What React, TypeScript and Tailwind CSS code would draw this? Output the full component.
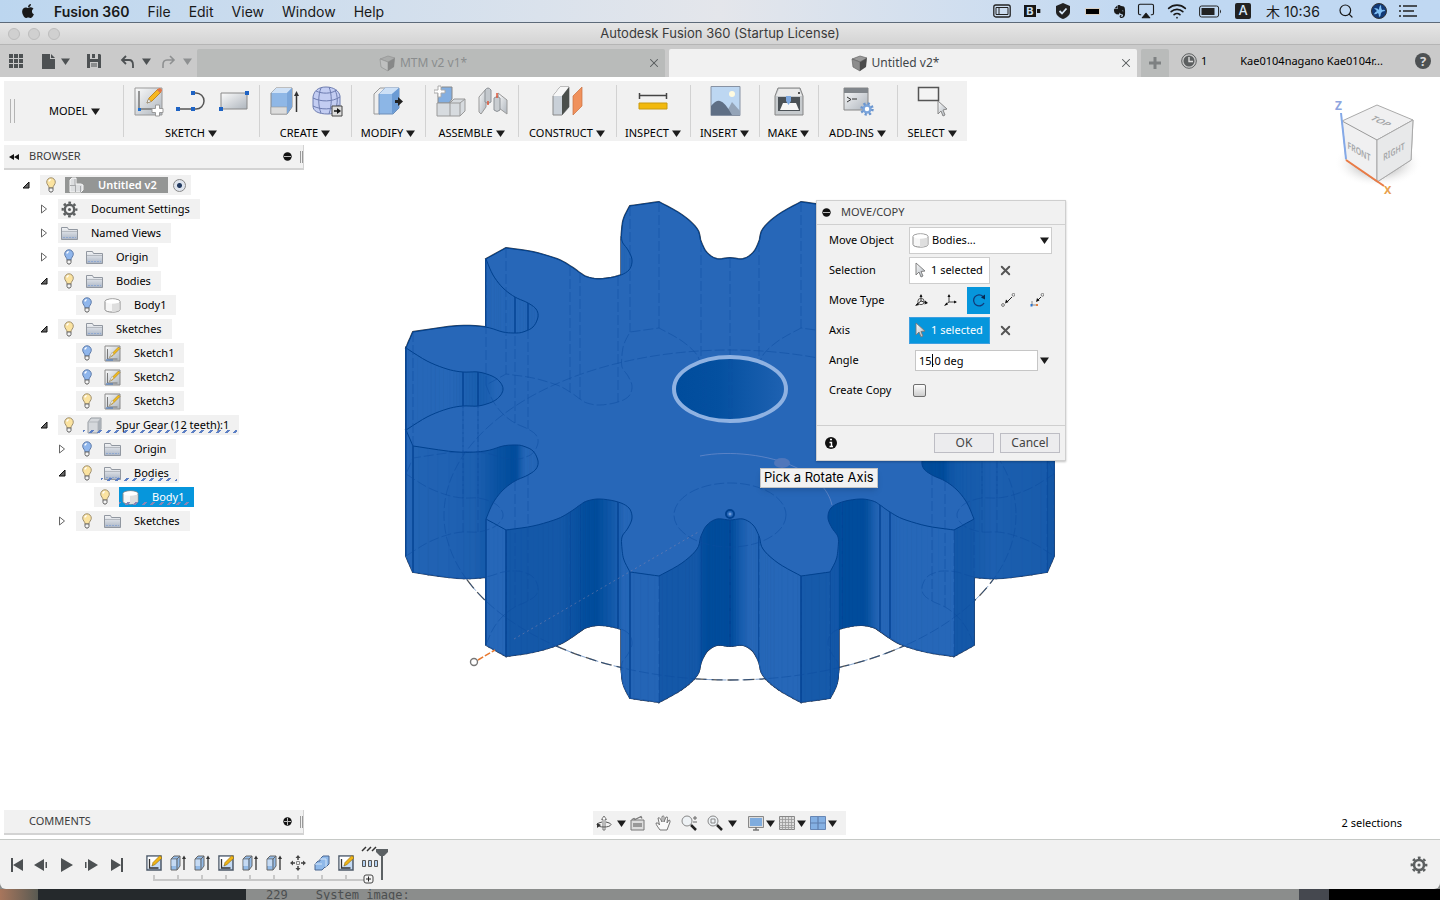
import { useState } from 'react';
import type { ReactNode } from 'react';
import { FaApple, FaEvernote } from 'react-icons/fa';
import { Airplay, Search, Wifi, X } from 'lucide-react';
import clsx from 'clsx';

/* ---------- gear geometry ---------- */

type Mark = 0 | 1 | 2; // 1 = sharp corner, 2 = seam between surfaces
type Pt = [number, number, Mark];

const CX = 730;
const CY = 389;
const DEPTH = 126;
const TILT = 0.58;

// one quarter of the top face, from twelve o'clock round to nine o'clock
const QUARTER: Pt[] = [
    [0, -131, 2], [-13, -130, 0], [-23, -136, 0], [-29, -147, 2], [-33, -160, 0], [-48, -174, 0],
    [-71, -187, 1], [-100, -183, 1], [-106, -171, 0], [-108, -160, 0], [-108, -148, 0], [-102, -139, 0],
    [-98, -129, 0], [-101, -119, 0], [-112, -113, 2], [-130, -110, 0], [-143, -112, 0], [-150, -116, 2],
    [-160, -123, 2], [-173, -130, 0], [-197, -137, 0], [-224, -141, 1], [-244, -130, 1], [-237, -114, 0],
    [-227, -101, 0], [-215, -92, 2], [-202, -86, 2], [-194, -80, 0], [-192, -72, 0], [-197, -62, 0],
    [-207, -57, 0], [-215, -56, 0], [-227, -57, 0], [-245, -62, 0], [-273, -63, 0], [-317, -57, 1],
    [-324, -41, 1], [-303, -28, 0], [-283, -20, 0], [-267, -17, 2], [-252, -17, 2], [-238, -13, 0],
    [-230, -7, 0], [-227, 0, 0],
];

const leftHalf: Pt[] = [
    ...QUARTER,
    ...QUARTER.slice(0, -1).reverse().map(([x, y, m]): Pt => [x, -y, m]),
];
const ring: Pt[] = [
    ...leftHalf,
    ...leftHalf.slice(1, -1).reverse().map(([x, y, m]): Pt => [-x, y, m]),
];

function spline(a: number, b: number, c: number, d: number, t: number) {
    return 0.5 * (2 * b + (c - a) * t + (2 * a - 5 * b + 4 * c - d) * t * t + (3 * b - a - 3 * c + d) * t * t * t);
}

const STEPS = 5;
const outline: Pt[] = ring.flatMap((p1, i) => {
    const n = ring.length;
    const p2 = ring[(i + 1) % n];
    const p0 = p1[2] === 1 ? p1 : ring[(i + n - 1) % n];
    const p3 = p2[2] === 1 ? p2 : ring[(i + 2) % n];
    return Array.from({ length: STEPS }, (_, s): Pt => [
        CX + spline(p0[0], p1[0], p2[0], p3[0], s / STEPS),
        CY + spline(p0[1], p1[1], p2[1], p3[1], s / STEPS),
        s === 0 ? p1[2] : 0,
    ]);
});

const toPath = (dy: number) =>
    'M' + outline.map(([x, y]) => `${x.toFixed(1)} ${(y + dy).toFixed(1)}`).join('L') + 'Z';

// horizontal part of the surface normal, averaged over neighbours but never across a corner
function normalAt(i: number) {
    const n = outline.length;
    let from = i;
    let to = i + 1;
    for (let k = 0; k < 7 && outline[(from + n) % n][2] !== 1; k++) from--;
    for (let k = 0; k < 7 && outline[to % n][2] !== 1; k++) to++;
    const a = outline[(from + n) % n];
    const b = outline[to % n];
    const dy = (b[1] - a[1]) / TILT;
    return -dy / (Math.hypot(b[0] - a[0], dy) || 1);
}

const clamp = (v: number) => Math.max(0, Math.min(1, v));

// light comes from the left, the roots between the teeth sit in shadow
function shade(nx: number, x: number, y: number) {
    const light = [38, 103, 184];
    const medium = [20, 88, 168];
    const dark = [0, 76, 156];
    const turn = clamp((nx + 0.3) / 0.6);
    const radius = Math.hypot(x - CX, (y - CY) / TILT);
    const root = clamp((280 - radius) / 45) * clamp(1 + nx * 1.4);
    const rgb = light.map((v, k) => {
        const base = v + (medium[k] - v) * turn;
        return Math.round(base + (dark[k] - base) * root);
    });
    return `rgb(${rgb.join(',')})`;
}

const walls = outline
    .map((a, i) => {
        const b = outline[(i + 1) % outline.length];
        const y = (a[1] + b[1]) / 2;
        return {
            dx: b[0] - a[0],
            y,
            seam: a[2] > 0,
            x0: a[0],
            y0: a[1],
            d: `M${a[0]} ${a[1]}L${b[0]} ${b[1]}v${DEPTH}L${a[0]} ${a[1] + DEPTH}Z`,
            fill: shade(normalAt(i), a[0], y),
        };
    })
    .filter((w) => w.dx > 0)
    .sort((p, q) => p.y - q.y);

const marks = outline.filter((p) => p[2] > 0);

function Gear() {
    return (
        <svg viewBox="390 190 680 530" width="680" height="530" aria-label="Spur gear model">
            <defs>
                <linearGradient id="bore" x1="0" x2="1">
                    <stop offset="0" stopColor="#004c9c" />
                    <stop offset=".4" stopColor="#0450a0" />
                    <stop offset="1" stopColor="#1f62b2" />
                </linearGradient>
            </defs>
            <ellipse cx={CX} cy={CY + DEPTH} rx="286" ry="165" fill="none" stroke="#555" strokeWidth="1.3" strokeDasharray="11 5" />
            <path d={toPath(0)} fill="#2767b8" stroke="#3b4350" strokeWidth="2" />
            {walls.map((w, i) => (
                <path key={i} d={w.d} fill="none" stroke="#2b3d5a" strokeWidth="2" />
            ))}
            {walls.map((w, i) => (
                <g key={i}>
                    <path d={w.d} fill={w.fill} stroke={w.fill} strokeWidth=".8" />
                    {w.seam && <path d={`M${w.x0} ${w.y0}v${DEPTH}`} stroke="#003f8e" strokeWidth="1.3" />}
                </g>
            ))}
            <path d={toPath(0)} fill="#2767b8" stroke="#00418f" strokeWidth="1" />
            <g fill="none" stroke="#0c4c9f" strokeOpacity=".5" strokeDasharray="10 3">
                <path d={toPath(DEPTH)} />
                {marks.map(([x, y], i) => (
                    <path key={i} d={`M${x} ${y}v${DEPTH}`} />
                ))}
                <ellipse cx={CX} cy={CY + DEPTH} rx="286" ry="165" />
                <ellipse cx={CX} cy={CY + DEPTH} rx="56" ry="32" />
            </g>
            <ellipse cx={CX} cy={CY} rx="56" ry="32" fill="url(#bore)" stroke="#8fb2e2" strokeWidth="4" />
            <path d="M703 364v44M706 364v46M729 359v60M732 359v60" stroke="#0c4c9f" strokeOpacity=".4" strokeDasharray="10 3" />
            <circle cx="730" cy="514" r="4" fill="none" stroke="#00418f" strokeWidth="2" />
            <circle cx="730" cy="514" r="1.5" fill="#6f9bd6" />
            {/* rotate manipulator */}
            <path d="M700 456C730 450 770 455 795 467C815 477 828 488 832 505" fill="none" stroke="#7b94cf" strokeOpacity=".6" />
            <ellipse cx="782" cy="463" rx="8" ry="5" fill="#5077bb" />
            <path d="M514 639L700 531" stroke="#8c86ac" strokeOpacity=".5" strokeDasharray="2 3" />
            <path d="M478 660l17-10" stroke="#e8782e" strokeWidth="1.5" strokeDasharray="6 2" />
            <circle cx="474" cy="662" r="3.5" fill="#fff" stroke="#777" strokeWidth="1.4" />
        </svg>
    );
}

/* ---------- small icons ---------- */

const Caret = ({ className = 'text-[#1c1c1c]' }: { className?: string }) => (
    <svg width="9" height="7" viewBox="0 0 9 7" className={clsx('shrink-0', className)}>
        <path d="M0 .5h9L4.5 7z" fill="currentColor" />
    </svg>
);

function Gradients() {
    return (
        <svg className="absolute size-0" aria-hidden="true">
            <defs>
                <linearGradient id="steel" x1="0" y1="0" x2="1" y2="1">
                    <stop offset="0" stopColor="#fbfbfb" />
                    <stop offset="1" stopColor="#aeb5bd" />
                </linearGradient>
                <linearGradient id="folder" x1="0" y1="0" x2="0" y2="1">
                    <stop offset="0" stopColor="#f4f5f6" />
                    <stop offset="1" stopColor="#aab4c4" />
                </linearGradient>
            </defs>
        </svg>
    );
}

const Icon = ({ size = 32, box = 32, children }: { size?: number; box?: number; children: ReactNode }) => (
    <svg width={size} height={size} viewBox={`0 0 ${box} ${box}`} fill="none" className="shrink-0" aria-hidden="true">
        {children}
    </svg>
);

const Cog = ({ size = 18 }: { size?: number }) => (
    <Icon size={size} box={18}>
        <circle cx="9" cy="9" r="5" stroke="#5c5f60" strokeWidth="2.6" />
        <circle cx="9" cy="9" r="7.2" stroke="#5c5f60" strokeWidth="2.4" strokeDasharray="2.8 2.85" strokeDashoffset="1.4" />
        <circle cx="9" cy="9" r="1.6" fill="#5c5f60" />
    </Icon>
);

const Cube = ({ faded }: { faded?: boolean }) => (
    <Icon size={17} box={17}>
        <g opacity={faded ? 0.45 : 1}>
            <path d="M1 4l8-3 7 2-7 4z" fill="#9a9a9a" stroke="#666" strokeWidth=".7" />
            <path d="M1 4l8 3v9l-7-4z" fill={faded ? '#c8c8c8' : '#8c8c8c'} stroke="#666" strokeWidth=".7" />
            <path d="M9 7l7-4-1 9-6 4z" fill="#4c4c4c" />
        </g>
    </Icon>
);

const Bulb = ({ on }: { on: boolean }) => (
    <Icon size={16} box={16}>
        <path d="M8 .8a4.3 4.3 0 00-4.3 4.4C3.7 7.6 6 8.5 6 11h4c0-2.5 2.3-3.4 2.3-5.8A4.3 4.3 0 008 .8z" fill={on ? '#fbe3a0' : '#8fb6ec'} stroke={on ? '#a09070' : '#5f7ba8'} />
        <path d="M5.8 4.5a2.3 2.3 0 012-1.8" stroke="#fff" strokeWidth="1.3" />
        <path d="M6 11h4v2.500l-1 1.500H7l-1-1.500z" fill="#f4f4f4" stroke="#666" />
    </Icon>
);

const Folder = () => (
    <Icon size={17} box={17}>
        <path d="M.5 14.500v-12h6l1 2h9v10z" fill="url(#folder)" stroke="#9197a0" />
        <path d="M1 6.500h15" stroke="#b4b9c0" />
        <path d="M2 12.500h13" stroke="#8fa8d0" strokeDasharray="2 1" />
    </Icon>
);

const Cylinder = () => (
    <Icon size={17} box={17}>
        <path d="M1 4.500C1 1 16 1 16 4.500v8c0 3.500-15 3.500-15 0z" fill="#f6f6f6" stroke="#8b8b8b" />
        <path d="M8 6h7.500v7c-2 1.500-5 2-7.500 2z" fill="#dedede" />
        <ellipse cx="8.500" cy="4.500" rx="7" ry="2.200" fill="#fff" />
    </Icon>
);

const SketchSmall = () => (
    <Icon size={17} box={17}>
        <path d="M1 1h15v15H1z" fill="url(#steel)" stroke="#8a8a8a" />
        <path d="M3.500 4v10h10" stroke="#777" />
        <path d="M5.500 12.500l2-3.500 7-7 1.500 1.500-7 7z" fill="#f4bd1c" stroke="#946c12" strokeWidth=".5" />
        <path d="M5.500 12.500l2.500-5 1.500 1.500z" fill="#fff" stroke="#999" strokeWidth=".5" />
        <path d="M2 15h7" stroke="#3f75c0" />
    </Icon>
);

const SolidBox = () => (
    <Icon size={17} box={17}>
        <path d="M2 5l3-4h10v11l-3 4H2z" fill="#d5d8dc" stroke="#969ba1" />
        <path d="M2 5h10v11M12 5l3-4" stroke="#b3b7bc" />
        <path d="M12 5l3-4v11l-3 4z" fill="#aab0b7" />
    </Icon>
);

const Assembly = () => (
    <Icon size={16} box={16}>
        <path d="M2 3l2-2h4v6h5l2 1v5l-2 2H2z" fill="#dcdee0" stroke="#f8f8f8" />
        <path d="M2 8.500h6M7.500 8v7M7 2v6M12.500 9v6" stroke="#a6a8aa" />
    </Icon>
);

const Pointer = () => (
    <Icon size={16} box={16}>
        <path d="M4 1v12l3-3 2 5 2-1-2-4.500 4-.5z" fill="url(#steel)" stroke="#777" strokeWidth=".9" />
    </Icon>
);

const Dot = ({ plus }: { plus?: boolean }) => (
    <Icon size={9} box={9}>
        <circle cx="4.500" cy="4.500" r="4.200" fill="#111" />
        <path d={plus ? 'M1 4.500h7M4.500 1v7' : 'M1 4.500h7'} stroke="#bbb" />
    </Icon>
);

/* ---------- toolbar artwork ---------- */

const art = {
    sketch: (
        <Icon>
            <path d="M3 3h27v27H3z" fill="url(#steel)" stroke="#999" />
            <path d="M7 6v18h14" stroke="#777" strokeWidth="1.500" />
            <path d="M6 23h3v3H6z" fill="#1f6fd0" />
            <path d="M15 18l2-5 9-9 3 3-9 9z" fill="#f7b820" stroke="#b8790f" strokeWidth=".8" />
            <path d="M25 5l2-2q3 0 3 3l-2 2z" fill="#e0774a" />
            <path d="M15 18l1.500-4 2.500 2.500z" fill="#fff" stroke="#777" strokeWidth=".6" />
            <path d="M23.500 20h4v3.500H31v4h-3.500V31h-4v-3.500H20v-4h3.500z" fill="#fff" stroke="#999" />
        </Icon>
    ),
    line: (
        <Icon>
            <path d="M3 24h15M18 8h3a8 8 0 010 16h-3" stroke="#555" strokeWidth="1.500" />
            <path d="M1 22h4v4H1zM16 22h4v4h-4zM16 6h4v4h-4z" fill="#1e63c4" />
        </Icon>
    ),
    rect: (
        <Icon>
            <path d="M3 8h26v16H3z" fill="url(#steel)" stroke="#888" />
            <path d="M1 22h4v4H1zM27 6h4v4h-4z" fill="#1e63c4" />
        </Icon>
    ),
    extrude: (
        <Icon>
            <path d="M3 8l5-5h16v19l-5 7H3z" fill="#8fb7e6" stroke="#888" />
            <path d="M3 8h16l5-5H8z" fill="#cfe1f6" />
            <path d="M3 22h16v7H3z" fill="#dcdcdc" stroke="#999" strokeWidth=".6" />
            <path d="M19 8l5-5v19l-5 7z" fill="#7ba6da" />
            <path d="M28.500 27V9" stroke="#333" strokeWidth="1.500" />
            <path d="M26 11l2.500-5 2.500 5z" fill="#333" />
        </Icon>
    ),
    form: (
        <Icon>
            <path d="M2 12c1-6 5-10 13-10s13 4 14 9v9c0 5-4 9-12 9-10 0-15-3-15-8z" fill="#c3cdf2" stroke="#6d7cb0" />
            <path d="M2 13c8 4 19 4 27-1M2 21c8 4 19 4 26-1M10 3c-3 7-3 18 0 25M18 2c3 7 3 18 0 27M5 6c6 3 15 3 21-1M24 5c3 6 3 14 0 20" stroke="#6d7cb0" />
            <path d="M21 21h10v10H21z" fill="#ddd" stroke="#444" />
            <path d="M23 26h4" stroke="#111" strokeWidth="1.500" />
            <path d="M26 23l4 3-4 3z" fill="#111" />
        </Icon>
    ),
    modify: (
        <Icon>
            <path d="M2 9l6-6h5v20l-5 6H2z" fill="#eee" stroke="#999" />
            <path d="M7 9l6-6h14v20l-6 6H7z" fill="#8cb6e6" stroke="#6e8fb9" />
            <path d="M7 9h13l7-6H13z" fill="#cde0f6" />
            <path d="M20 9l7-6v20l-7 6z" fill="#6b9bd4" />
            <path d="M23 15h3v-3l5 4.500-5 4.500v-3h-3z" fill="#222" />
        </Icon>
    ),
    newComponent: (
        <Icon>
            <path d="M4 7l4-5h10v12l-3 4H4z" fill="#83aee0" stroke="#888" />
            <path d="M3 18h13l4-4h11v12l-5 5H3z" fill="#d7dbdf" stroke="#999" />
            <path d="M16 18v13M16 18h10v13M26 18l5-4" stroke="#999" />
            <path d="M4 1h3v4h4v3H7v4H4V8H0V5h4z" fill="#fff" stroke="#aaa" />
        </Icon>
    ),
    joint: (
        <Icon>
            <path d="M2 12l7-8v18l-5 7-2-2z" fill="url(#steel)" stroke="#999" />
            <path d="M8 5q3-4 6 0v12q-3 3-6 0z" fill="#c3c8cd" stroke="#8d9297" />
            <path d="M21 8l9 7v14l-8-6z" fill="url(#steel)" stroke="#999" />
            <path d="M17 13q3-3 6 0v12q-3 3-6 0z" fill="#c9cdd1" stroke="#8d9297" />
            <path d="M11 16v4M20 8v5" stroke="#e0573a" strokeWidth="1.500" />
        </Icon>
    ),
    construct: (
        <Icon>
            <path d="M2 11l7-9h9v20l-7 8H2z" fill="#c9d0d8" stroke="#888" />
            <path d="M2 11l7-9h9l-7 9z" fill="#f7f7f7" />
            <path d="M11 11l7-9v20l-7 8z" fill="#4b4f4c" />
            <path d="M22 11l9-9v19l-9 9z" fill="#f0915c" stroke="#c8703f" strokeWidth=".7" />
        </Icon>
    ),
    inspect: (
        <Icon>
            <path d="M2 10.500h28M2.500 8v6M29.500 8v6" stroke="#444" strokeWidth="1.500" />
            <path d="M2 18h28v6H2z" fill="#f2b90d" stroke="#c99a10" />
        </Icon>
    ),
    insert: (
        <Icon>
            <path d="M2 1.500h29v29H2z" fill="#bdd7f2" stroke="#8792a3" />
            <circle cx="23" cy="9" r="3" fill="#fffbe0" />
            <path d="M16 30l7-13 8 9v4z" fill="#94a4b8" />
            <path d="M2 21q5-6 9-5 5 1 12 14H2z" fill="#5f6f85" />
        </Icon>
    ),
    make: (
        <Icon>
            <path d="M5 3h22l3 8v19H2V11z" fill="#c6cacd" stroke="#858585" />
            <path d="M3 11l3-7h20l3 7z" fill="#e9e9e9" />
            <path d="M5 12h22v14H5z" fill="#4b5156" />
            <path d="M10 18h13l3 7H7z" fill="#f6f6f6" />
            <path d="M13 11h5v5l-2.500 4-2.500-4z" fill="#7ea8df" />
            <circle cx="26" cy="8" r="1" fill="#222" />
        </Icon>
    ),
    addins: (
        <Icon>
            <path d="M2 3h24v22H2z" fill="url(#steel)" stroke="#888" />
            <path d="M2 3h24v5H2z" fill="#81868b" />
            <path d="M5 12l4 2.500L5 17M10 14h5" stroke="#333" />
            <circle cx="25" cy="24" r="3.500" fill="#fff" stroke="#7ba5dc" strokeWidth="2.500" />
            <circle cx="25" cy="24" r="5.500" stroke="#6b96cf" strokeWidth="2.500" strokeDasharray="2.200 2.120" />
        </Icon>
    ),
    select: (
        <Icon>
            <path d="M2.500 2.500h20v13h-20z" fill="#f4f4f4" stroke="#555" strokeWidth="1.500" />
            <path d="M22 16v13l3-3 2 5 2-1-2-5 4-1z" fill="url(#steel)" stroke="#888" />
        </Icon>
    ),
};

const GROUPS = [
    { label: 'SKETCH', width: 'w-[136px]', icons: [art.sketch, art.line, art.rect] },
    { label: 'CREATE', width: 'w-[92px]', icons: [art.extrude, art.form] },
    { label: 'MODIFY', width: 'w-[74px]', icons: [art.modify] },
    { label: 'ASSEMBLE', width: 'w-[93px]', icons: [art.newComponent, art.joint] },
    { label: 'CONSTRUCT', width: 'w-[98px]', icons: [art.construct] },
    { label: 'INSPECT', width: 'w-[74px]', icons: [art.inspect] },
    { label: 'INSERT', width: 'w-[69px]', icons: [art.insert] },
    { label: 'MAKE', width: 'w-[59px]', icons: [art.make] },
    { label: 'ADD-INS', width: 'w-[79px]', icons: [art.addins] },
    { label: 'SELECT', width: 'w-[70px]', icons: [art.select] },
];

/* ---------- top bars ---------- */

function MenuBar() {
    const status: { width: string; node: ReactNode }[] = [
        {
            width: 'w-[30px]',
            node: (
                <Icon size={18} box={18}>
                    <rect x=".8" y="3" width="16.400" height="12" rx="2" stroke="#222" strokeWidth="1.300" />
                    <path d="M3 5.500h12v7H3zM6 5.500v7" stroke="#222" />
                </Icon>
            ),
        },
        {
            width: 'w-[31px]',
            node: (
                <span className="flex h-3 items-center gap-px">
                    <span className="flex h-3 w-3 items-center justify-center bg-[#161616] text-[11px] font-bold text-[#cfe0f3]">B</span>
                    <Icon size={4} box={12}><path d="M0 -12L10 -18v48L0 24z" fill="#161616" /></Icon>
                </span>
            ),
        },
        {
            width: 'w-[30px]',
            node: (
                <Icon size={16} box={16}>
                    <path d="M8 0l7 3v6c0 3-3 5.500-7 7-4-1.500-7-4-7-7V3z" fill="#222" />
                    <path d="M4.500 8l2.500 2.500 4.500-5" stroke="#d7e6f6" strokeWidth="1.800" />
                </Icon>
            ),
        },
        { width: 'w-[29px]', node: <span className="h-[5px] w-[13px] bg-black outline outline-[#d8cfc3]" /> },
        { width: 'w-[25px]', node: <FaEvernote size={15} /> },
        {
            width: 'w-7',
            node: <Airplay size={18} strokeWidth={1.5} className="[&>path:last-child]:fill-current [&>polygon]:fill-current" />,
        },
        { width: 'w-[33px]', node: <Wifi size={20} strokeWidth={2} /> },
        {
            width: 'w-[35px]',
            node: (
                <Icon size={23} box={23}>
                    <rect x=".6" y="6" width="19" height="11" rx="2" stroke="#222" />
                    <path d="M2.500 8h13v7h-13z" fill="#222" />
                    <path d="M21 9.500q2 2 0 4z" fill="#222" />
                </Icon>
            ),
        },
        {
            width: 'w-[30px]',
            node: <span className="flex size-4 items-center justify-center rounded-xs bg-[#222] text-[13px] font-medium text-[#d7e6f6]">A</span>,
        },
    ];
    return (
        <header className="flex h-[23px] items-center justify-between border-b border-[#5d6a79] bg-linear-to-r from-[#bcd6ef] via-[#e4e6eb] to-[#c0d8f2] to-80% pr-[18px] pl-5 font-[Inter,'Noto_Sans_CJK_JP',sans-serif] text-[14px] text-[#191919]">
            <nav className="flex items-center gap-[18px]">
                <a href="#apple" aria-label="Apple menu"><FaApple size={16} /></a>
                <a href="#app" className="font-semibold">Fusion 360</a>
                {['File', 'Edit', 'View', 'Window', 'Help'].map((m) => (
                    <a key={m} href={`#${m}`}>{m}</a>
                ))}
            </nav>
            <div className="flex items-center">
                {status.map((s, i) => (
                    <span key={i} className={clsx('flex items-center justify-center', s.width)}>{s.node}</span>
                ))}
                <span className="w-[70px] text-center whitespace-nowrap">木 10:36</span>
                <span className="flex w-[35px] justify-center"><Search size={16} strokeWidth={1.8} /></span>
                <span className="flex w-[31px] justify-center">
                    <Icon size={16} box={16}>
                        <circle cx="8" cy="8" r="7.500" fill="#123a78" stroke="#333" />
                        <path d="M3 5q4 0 5 2 0-4 2-5 0 4 1 5 3-1 3 1-3 0-4 2 0 3-2 4 0-3-1-4-3 2-4 1 1-2 3-3z" fill="#7fc0f5" />
                    </Icon>
                </span>
                <span className="flex w-7 justify-center">
                    <Icon size={18} box={18}>
                        <path d="M0 4h2M0 9h2M0 14h2M4 4h14M4 9h11M4 14h14" stroke="#222" strokeWidth="1.700" />
                    </Icon>
                </span>
            </div>
        </header>
    );
}

function TabBar() {
    return (
        <div className="flex h-8 items-end bg-[#cacaca] text-[#3f4548]">
            <div className="flex h-8 w-[197px] shrink-0 items-center pl-2">
                <button aria-label="Data panel">
                    <Icon size={16} box={16}>
                        <path d="M1 1h4v4H1zM6 1h4v4H6zM11 1h4v4h-4zM1 6h4v4H1zM6 6h4v4H6zM11 6h4v4h-4zM1 11h4v4H1zM6 11h4v4H6zM11 11h4v4h-4z" fill="#4d5153" />
                    </Icon>
                </button>
                <button aria-label="File" className="ml-4 flex items-center gap-1">
                    <Icon size={17} box={17}>
                        <path d="M2 1h8v5h5v10H2zM11 1l4 4h-4z" fill="#4d5153" />
                    </Icon>
                    <Caret className="text-[#4d5153]" />
                </button>
                <button aria-label="Save" className="ml-4">
                    <Icon size={16} box={16}>
                        <path d="M1 1h13l1 1v13H1z" fill="#4d5153" />
                        <path d="M4 1h8v5H4zM4 9h8v6H4z" fill="#cacaca" />
                        <path d="M6 1h3v4H6z" fill="#4d5153" />
                        <path d="M5 11h6M5 13h6" stroke="#4d5153" />
                    </Icon>
                </button>
                <button aria-label="Undo" className="ml-[18px] flex items-center gap-[7px]">
                    <Icon size={15} box={15}>
                        <path d="M2 6h7q4 0 4 5v3M6 2L2 6l4 4" stroke="#4d5153" strokeWidth="1.800" />
                    </Icon>
                    <Caret className="text-[#4d5153]" />
                </button>
                <button aria-label="Redo" className="ml-[10px] flex items-center gap-[7px]">
                    <Icon size={15} box={15}>
                        <path d="M13 6H6q-4 0-4 5v3M9 2l4 4-4 4" stroke="#8e9091" strokeWidth="1.600" />
                    </Icon>
                    <Caret className="text-[#8e9091]" />
                </button>
            </div>
            <div className="flex flex-1 gap-1 text-[12px]">
                {[
                    { name: 'MTM v2 v1*', active: false },
                    { name: 'Untitled v2*', active: true },
                ].map((t) => (
                    <div
                        key={t.name}
                        className={clsx(
                            'relative flex h-7 flex-1 items-center justify-center gap-1 rounded-t-xs pr-4',
                            t.active ? 'bg-[#f1f1f1]' : 'bg-[#b9bbba] text-[#8a8d8e]'
                        )}
                    >
                        <Cube faded={!t.active} />
                        <a href="#document">{t.name}</a>
                        <button aria-label={`Close ${t.name}`} className="absolute right-1">
                            <X size={14} strokeWidth={1.8} className="text-[#55595b]" />
                        </button>
                    </div>
                ))}
            </div>
            <div className="flex h-8 w-[303px] shrink-0 items-end pl-1">
                <button aria-label="New tab" className="flex h-7 w-7 items-center justify-center rounded-t-xs bg-[#b9bbba]">
                    <Icon size={12} box={12}><path d="M0 6h12M6 0v12" stroke="#7e8182" strokeWidth="3" /></Icon>
                </button>
                <div className="flex h-8 flex-1 items-center pl-3 text-[11px] text-black">
                    <Icon size={16} box={16}>
                        <circle cx="8" cy="8" r="7.300" stroke="#5c5f60" />
                        <circle cx="8" cy="8" r="5.500" fill="#5c5f60" />
                        <path d="M8 4v4.500h4" stroke="#ddd" strokeWidth="1.400" />
                    </Icon>
                    <span className="ml-1">1</span>
                    <span className="ml-[33px] whitespace-nowrap">Kae0104nagano Kae0104r...</span>
                    <button aria-label="Help" className="mr-[9px] ml-auto flex size-4 items-center justify-center rounded-full bg-[#4d5153] text-[13px] leading-4 font-bold text-[#d8d8d8]">?</button>
                </div>
            </div>
        </div>
    );
}

function Toolbar() {
    return (
        <div className="ml-1 flex h-[60px] w-fit bg-[#f1f1f1] text-[11px] text-black">
            <div className="flex w-[119px] items-center">
                <span className="ml-1.5 h-6 w-[5px] border-x border-[#b4b4b4]" />
                <button className="ml-[34px] flex items-center gap-1">MODEL <Caret /></button>
            </div>
            {GROUPS.map((g) => (
                <div key={g.label} className={clsx('relative flex flex-col items-center pt-1', g.width)}>
                    <span className="absolute top-1 left-0 h-[52px] w-px bg-[#d2d2d2]" />
                    <div className="flex gap-[11px]">
                        {g.icons.map((icon, i) => (
                            <button key={i} aria-label={`${g.label} tool ${i + 1}`}>{icon}</button>
                        ))}
                    </div>
                    <button className="mt-2 flex h-4 items-center gap-[3px] leading-4 whitespace-nowrap">{g.label} <Caret /></button>
                </div>
            ))}
        </div>
    );
}

/* ---------- browser ---------- */

interface TreeRow {
    label: string;
    depth: 0 | 1 | 2 | 3;
    open?: boolean;
    bulb?: boolean;
    icon: ReactNode;
    hatch?: boolean;
    tone?: 'root' | 'picked';
}

const ROWS: TreeRow[] = [
    { label: 'Untitled v2', depth: 0, open: true, bulb: true, icon: <Assembly />, tone: 'root' },
    { label: 'Document Settings', depth: 1, open: false, icon: <Cog size={17} /> },
    { label: 'Named Views', depth: 1, open: false, icon: <Folder /> },
    { label: 'Origin', depth: 1, open: false, bulb: false, icon: <Folder /> },
    { label: 'Bodies', depth: 1, open: true, bulb: true, icon: <Folder /> },
    { label: 'Body1', depth: 2, bulb: false, icon: <Cylinder /> },
    { label: 'Sketches', depth: 1, open: true, bulb: true, icon: <Folder /> },
    { label: 'Sketch1', depth: 2, bulb: false, icon: <SketchSmall /> },
    { label: 'Sketch2', depth: 2, bulb: false, icon: <SketchSmall /> },
    { label: 'Sketch3', depth: 2, bulb: true, icon: <SketchSmall /> },
    { label: 'Spur Gear (12 teeth):1', depth: 1, open: true, bulb: true, icon: <SolidBox />, hatch: true },
    { label: 'Origin', depth: 2, open: false, bulb: false, icon: <Folder /> },
    { label: 'Bodies', depth: 2, open: true, bulb: true, icon: <Folder />, hatch: true },
    { label: 'Body1', depth: 3, bulb: true, icon: <Cylinder />, hatch: true, tone: 'picked' },
    { label: 'Sketches', depth: 2, open: false, bulb: true, icon: <Folder /> },
];

const INDENT = ['pl-4', 'pl-[34px]', 'pl-[52px]', 'pl-[70px]'];

function Expander({ open }: { open?: boolean }) {
    return (
        <button aria-label={open ? 'Collapse' : 'Expand'} className="flex w-5 justify-center">
            <Icon size={10} box={10}>
                {open ? <path d="M8 2v6H2z" fill="#666" stroke="#111" /> : <path d="M2.500 1l5 4-5 4z" fill="#fff" stroke="#666" />}
            </Icon>
        </button>
    );
}

function Panel({ title, plus }: { title: string; plus?: boolean }) {
    return (
        <div className="flex h-[25px] w-[300px] items-center border-r border-b-2 border-[#d3d3d3] bg-[#f1f1f1] text-[11px] text-[#3c3c3c]">
            <span className="flex w-[25px] pl-[5px]">
                {!plus && (
                    <Icon size={10} box={10}><path d="M5 2v6L0 5zM10 2v6L5 5z" fill="#111" /></Icon>
                )}
            </span>
            {title}
            <button aria-label={`Toggle ${title.toLowerCase()}`} className="mr-2 ml-auto"><Dot plus={plus} /></button>
            <span className="h-3 w-[3px] border-x border-[#999]" />
        </div>
    );
}

function Browser() {
    return (
        <section className="ml-1">
            <Panel title="BROWSER" />
            <ul className="-ml-1 pt-[3px] text-[11px] text-black">
                {ROWS.map((r, i) => (
                    <li key={i} className={clsx('flex h-6 items-center gap-1', INDENT[r.depth])}>
                        {r.open === undefined ? <span className="w-5" /> : <Expander open={r.open} />}
                        <div className="flex h-5 items-center bg-[#f1f1f1]">
                            {r.bulb !== undefined && (
                                <button aria-label={`Toggle ${r.label}`} className="mr-[3px] flex w-[22px] justify-center"><Bulb on={r.bulb} /></button>
                            )}
                            <a
                                href="#item"
                                className={clsx(
                                    'relative flex items-center whitespace-nowrap',
                                    r.tone === 'root' && 'h-4 bg-[#949695] pr-[11px] font-semibold text-white',
                                    r.tone === 'picked' && 'h-5 bg-[#0696dc] pr-2.5 text-white',
                                    !r.tone && 'h-5 pr-2.5'
                                )}
                            >
                                <span className="flex w-[22px] justify-center">{r.icon}</span>
                                <span className="pl-[11px] leading-5">{r.label}</span>
                                {r.hatch && (
                                    <span
                                        className={clsx(
                                            'absolute right-0.5 bottom-0.5 left-0 h-[3px]',
                                            r.tone
                                                ? 'bg-[repeating-linear-gradient(135deg,#8a86b4_0_2px,transparent_2px_6px)]'
                                                : 'bg-[repeating-linear-gradient(135deg,#5c7fc4_0_2px,transparent_2px_6px)]'
                                        )}
                                    />
                                )}
                            </a>
                            {r.tone === 'root' && (
                                <input
                                    type="radio"
                                    defaultChecked
                                    aria-label="Activate component"
                                    className="mx-[5px] size-[13px] appearance-none rounded-full border border-[#888] bg-[radial-gradient(circle,#223a60_0_2px,#dfe5ee_3px)]"
                                />
                            )}
                        </div>
                    </li>
                ))}
            </ul>
        </section>
    );
}

/* ---------- move dialog ---------- */

const MOVE_TYPES = [
    {
        name: 'Free move',
        art: <><path d="M7 8V2M7 8l6 2M7 8l-5 4" stroke="#333" /><path d="M5.500 4L7 1l1.500 3zM11 7.500l3 2.500-3.500 1.500zM4 9.500L1 13l4-1z" fill="#111" /><circle cx="7" cy="8.500" r="3.200" stroke="#555" /></>,
    },
    {
        name: 'Translate',
        art: <><path d="M6 9V2M6 9h7M6 9l-4 3" stroke="#444" /><path d="M4.500 4L6 1l1.500 3zM11 7.500l3 1.500-3 1.500zM3.500 9.500L1 13l4-1.500z" fill="#111" /></>,
    },
    {
        name: 'Rotate',
        art: <><path d="M11 3.500A5.500 5.500 0 1012 10" stroke="#123a78" strokeWidth="1.300" /><path d="M9 4.500l4-3v5z" fill="#06284f" /></>,
    },
    {
        name: 'Point to point',
        art: <><circle cx="2" cy="12" r="1.400" stroke="#777" /><circle cx="12.500" cy="1.800" r="1.400" stroke="#777" /><path d="M11 4L6 9" stroke="#222" /><path d="M4 10.500l1-4 2.500 2.500z" fill="#111" /></>,
    },
    {
        name: 'Point to position',
        art: <><circle cx="12.500" cy="1.800" r="1.400" stroke="#777" /><path d="M11 4L8 7" stroke="#222" /><path d="M6 9l1-4 2.500 2.500z" fill="#111" /><path d="M2 8v4h5" stroke="#888" /><path d="M.5 11h2v2.500h-2z" fill="#2a75d0" /><path d="M6 11h2v2H6z" fill="#e08040" /></>,
    },
];

function Field({ label, id, children }: { label: string; id?: string; children: ReactNode }) {
    return (
        <div className="flex h-[30px] items-center">
            <label htmlFor={id} className="w-20 shrink-0">{label}</label>
            {children}
        </div>
    );
}

function MoveDialog() {
    const [mode, setMode] = useState('Rotate');
    const [angle, setAngle] = useState('15.0 deg');
    return (
        <form
            onSubmit={(e) => e.preventDefault()}
            className="absolute top-[123px] left-[816px] w-[250px] border border-[#cfcfcf] bg-[#f1f1f1] text-[11px] text-black shadow-[0_1px_2px_rgba(0,0,0,0.25)]"
        >
            <h2 className="flex h-6 items-center gap-[10px] border-b border-[#d0d0d0] pl-[5px] text-[#3c3c3c]">
                <Dot /> MOVE/COPY
            </h2>
            <div className="pl-3">
                <Field label="Move Object" id="object">
                    <div className="relative">
                        <select id="object" className="h-[27px] w-[143px] appearance-none border border-[#cdcdcd] bg-white pl-[22px]">
                            <option>Bodies...</option>
                        </select>
                        <span className="pointer-events-none absolute top-[5px] left-[3px]"><Cylinder /></span>
                        <span className="pointer-events-none absolute top-[10px] right-[3px]"><Caret /></span>
                    </div>
                </Field>
                <Field label="Selection">
                    <button type="button" className="flex h-[27px] w-[81px] items-center gap-[3px] border border-[#cdcdcd] bg-white pl-0.5 whitespace-nowrap"><Pointer />1 selected</button>
                    <button type="button" aria-label="Clear selection" className="ml-2"><X size={15} strokeWidth={3} className="text-[#555]" /></button>
                </Field>
                <Field label="Move Type">
                    <div className="flex gap-[6px]">
                        {MOVE_TYPES.map((t) => (
                            <button
                                key={t.name}
                                type="button"
                                aria-label={t.name}
                                onClick={() => setMode(t.name)}
                                className={clsx('flex h-[27px] w-[23px] items-center justify-center', mode === t.name && 'bg-[#0696dc]')}
                            >
                                <Icon size={14} box={14}>{t.art}</Icon>
                            </button>
                        ))}
                    </div>
                </Field>
                <Field label="Axis">
                    <button type="button" className="flex h-[27px] w-[81px] items-center gap-[3px] border border-[#3d9fe0] bg-[#0696dc] pl-0.5 whitespace-nowrap text-white"><Pointer />1 selected</button>
                    <button type="button" aria-label="Clear axis" className="ml-2"><X size={15} strokeWidth={3} className="text-[#555]" /></button>
                </Field>
                <Field label="Angle" id="angle">
                    <div className="relative ml-[6px]">
                        <input id="angle" value={angle} onChange={(e) => setAngle(e.target.value)} className="h-[21px] w-[123px] border border-[#c6c6c6] bg-white pl-[3px]" />
                        <span className="absolute top-1 left-[17px] h-[13px] w-px bg-black" />
                    </div>
                    <button type="button" aria-label="Angle options" className="ml-0.5"><Caret /></button>
                </Field>
                <Field label="Create Copy" id="copy">
                    <input id="copy" type="checkbox" className="ml-1 size-[13px] appearance-none rounded-xs border border-[#6f6f6f] bg-linear-to-b from-[#fdfdfd] to-[#cdcdcd]" />
                </Field>
            </div>
            <div className="mt-5 flex h-[35px] items-center border-t border-[#cfcfcf] pr-[5px] pl-2 text-[12px] text-[#444]">
                <Icon size={12} box={12}>
                    <circle cx="6" cy="6" r="6" fill="#111" />
                    <path d="M5 2.500h2M4.500 5.500h2v3.500M4.500 9.500h3.500" stroke="#fff" strokeWidth="1.400" />
                </Icon>
                <button type="submit" className="ml-auto h-5 w-[60px] border border-[#bdbdc4] bg-[#ececee] leading-4">OK</button>
                <button type="button" className="ml-[6px] h-5 w-[60px] border border-[#bdbdc4] bg-[#ececee] leading-4">Cancel</button>
            </div>
        </form>
    );
}

/* ---------- view cube ---------- */

function ViewCube() {
    return (
        <svg viewBox="1325 95 100 105" width="100" height="105" className="absolute top-[18px] right-[14px] font-['Noto_Sans',sans-serif]">
            <defs>
                <radialGradient id="cubeShadow">
                    <stop offset=".4" stopColor="#999" stopOpacity=".6" />
                    <stop offset="1" stopColor="#fff" stopOpacity="0" />
                </radialGradient>
            </defs>
            <ellipse cx="1377" cy="163" rx="44" ry="24" fill="url(#cubeShadow)" />
            <path d="M1376 105l36 15-2 40-34 22-31-22-4-39z" fill="#f0f0f1" stroke="#aaa" />
            <path d="M1341 121l35 19 36-20M1376 140v42" fill="none" stroke="#999" />
            <path d="M1376 140l36-20-2 40-34 22z" fill="#e8e9ea" stroke="#aaa" />
            <path d="M1340 113l5 46" stroke="#84a9e8" strokeWidth="2" />
            <path d="M1345 160l38 26" stroke="#ea7b45" strokeWidth="2" />
            <g fill="#a4a6a8" fontWeight="600" textAnchor="middle">
                <text transform="matrix(.9 .4 -.8 .45 1377 123)" fontSize="10">TOP</text>
                <text transform="matrix(.87 .5 0 1.2 1358 155)" fontSize="8">FRONT</text>
                <text transform="matrix(.87 -.5 0 1.2 1393 155)" fontSize="8">RIGHT</text>
            </g>
            <text x="1334" y="110" fontSize="12" fontWeight="700" fill="#8ea5e0">Z</text>
            <text x="1383" y="194" fontSize="11" fontWeight="700" fill="#e8a04c">X</text>
        </svg>
    );
}

/* ---------- bottom bars ---------- */

const nav = {
    orbit: <><path d="M8 1l2.500 3.500H9V15H7V4.500H5.500z" fill="#fff" stroke="#777" /><path d="M6 7Q1 8 1 9.500 2 12 8 12t7-2.500Q15 8 10 7" stroke="#555" /><path d="M1 8l4 2-4 3z" fill="#333" /></>,
    lookAt: <><path d="M2 5h13v10H2z" fill="#ddd" stroke="#777" /><path d="M4 8h9v4H4z" fill="#999" /><path d="M3 4.500l2-1 1 1 6-3 1 2" stroke="#777" strokeWidth="1.300" /></>,
    pan: <path d="M5 15C3 12 1 10 1 8q2-1 3.500 2L3 3q1.500-1 2.500 1L7 7V1.500q1.500-1 2 0V7l2-5q2-.5 1.500 1.500L12 8l2-3q1.500 0 1 2l-3 8z" fill="#fafafa" stroke="#777" />,
    zoom: <><circle cx="6" cy="6" r="5" fill="#eef2f5" stroke="#888" /><path d="M10 10l5 5" stroke="#222" strokeWidth="2.500" /><path d="M12 3h4M14 1v4M12 7h4" stroke="#666" /></>,
    fit: <><circle cx="6" cy="6" r="5" fill="#eef2f5" stroke="#888" /><path d="M4 4h4v4H4z" stroke="#888" /><path d="M10 10l5 5" stroke="#222" strokeWidth="2.500" /></>,
    display: <><path d="M.5 1.500h15v11H.5z" fill="#ddd" stroke="#888" /><path d="M2 3h12v8H2z" fill="#7facde" /><path d="M5 15h6M8 12v3" stroke="#777" strokeWidth="1.500" /></>,
    grid: <><path d="M.5 1.500h15v13H.5z" fill="#ddd" stroke="#888" /><path d="M3.500 2v13M6.500 2v13M9.500 2v13M12.500 2v13M0 4.500h16M0 7.500h16M0 10.500h16M0 12.500h16" stroke="#999" strokeWidth=".8" /></>,
    views: <><path d="M.5 1.500h15v13H.5z" fill="#84b0e3" stroke="#6787b5" /><path d="M8 2v13M0 8h16" stroke="#5f7fae" strokeWidth="1.200" /></>,
};

function NavBar() {
    return (
        <div className="absolute bottom-1 left-[593px] flex h-6 w-[253px] items-center bg-[#f1f1f1] pl-[3px]">
            <button aria-label="Orbit" className="flex items-center gap-[5px]"><Icon size={16} box={16}>{nav.orbit}</Icon><Caret /></button>
            <button aria-label="Look at" className="ml-[3px]"><Icon size={16} box={16}>{nav.lookAt}</Icon></button>
            <button aria-label="Pan" className="ml-[10px]"><Icon size={16} box={16}>{nav.pan}</Icon></button>
            <button aria-label="Zoom" className="ml-[10px]"><Icon size={16} box={16}>{nav.zoom}</Icon></button>
            <button aria-label="Fit" className="ml-[10px] flex items-center gap-[5px]"><Icon size={16} box={16}>{nav.fit}</Icon><Caret /></button>
            <div className="ml-[11px] flex gap-1">
                {[nav.display, nav.grid, nav.views].map((n, i) => (
                    <button key={i} aria-label={`Display option ${i + 1}`} className="flex items-center gap-0.5"><Icon size={16} box={16}>{n}</Icon><Caret /></button>
                ))}
            </div>
        </div>
    );
}

const FEATURES = ['sketch', 'extrude', 'extrude', 'sketch', 'extrude', 'extrude', 'move', 'combine', 'sketch'] as const;

const featureArt = {
    sketch: <><path d="M1 1h14v14H1z" fill="#c4dbf5" stroke="#4d5a68" strokeWidth="1.500" /><path d="M1.700 1.700h12.600L1.700 14z" fill="#fff" /><path d="M3.500 4v9h9" stroke="#333" strokeWidth="1.300" /><path d="M6 11l1-3.500 7-7L16 3 9 9.500z" fill="#f0b414" stroke="#8a6a14" strokeWidth=".6" /></>,
    extrude: <><path d="M1 4l3-3h6v10l-3 4H1z" fill="#93bbe8" stroke="#666" /><path d="M1 4h6v11M7 4l3-3" stroke="#666" /><path d="M1.500 4.500H6V11H1.500z" fill="#c5daf3" /><path d="M14 15V3" stroke="#333" strokeWidth="1.300" /><path d="M12 4l2-3.500L16 4z" fill="#333" /></>,
    move: <><path d="M8 2v3M8 11v3M2 8h3M11 8h3" stroke="#444" strokeWidth="1.500" /><path d="M5.500 3L8 0l2.500 3zM5.500 13L8 16l2.500-3zM3 5.500L0 8l3 2.500zM13 5.500L16 8l-3 2.500z" fill="#444" /><path d="M6.500 6.500h3v3h-3z" stroke="#888" /></>,
    combine: <><path d="M6 4l3-3h6v8l-3 3h-1l-3 3H1V9l3-3h2z" fill="#8fb9ea" stroke="#4b6690" /><path d="M6 4h6v8M1 9h7" stroke="#d5e5f7" /></>,
};

function Timeline() {
    return (
        <footer className="flex h-[50px] items-center rounded-b-md border-t border-[#c6c9c6] bg-[#f1f1f1] pr-3">
            <div className="ml-[9px] flex gap-[9px] text-[#4d5153]">
                {[
                    ['Start', 'M2 1h2v14H2zM14 2v12L4 8z'],
                    ['Step back', 'M10 2v12L0 8zM11.500 5v6H13V5z'],
                    ['Play', 'M2 1l12 7-12 7z'],
                    ['Step forward', 'M4 2v12l10-6zM1 5v6h1.500V5z'],
                    ['End', 'M12 1h2v14h-2zM2 2v12l10-6z'],
                ].map(([name, d]) => (
                    <button key={name} aria-label={name}><Icon size={16} box={16}><path d={d} fill="currentColor" /></Icon></button>
                ))}
            </div>
            <div className="relative ml-[17px] flex h-full">
                <span className="absolute top-[39px] -right-3 left-[11px] h-0.5 bg-[#c8c8c8]" />
                {FEATURES.map((f, i) => (
                    <button key={i} aria-label={`${f} feature`} className="relative flex h-[41px] w-6 flex-col items-center justify-between pt-[15px]">
                        <Icon size={16} box={16}>{featureArt[f]}</Icon>
                        <span className="h-1.5 w-0.5 bg-[#c8c8c8]" />
                    </button>
                ))}
            </div>
            <button aria-label="Pattern feature and playhead" className="relative">
                <svg width="30" height="44" viewBox="0 0 30 44" fill="none">
                    <path d="M4 8l4-4M9 8l4-4M14 8l4-4" stroke="#333" strokeWidth="1.500" />
                    <path d="M4.500 17.500h3v6h-3zM10.500 17.500h3v6h-3zM16.500 17.500h3v6h-3z" fill="#b5d2f2" stroke="#555" />
                    <path d="M18 6h12v3l-4 4h-4l-4-4z" fill="#5c6164" />
                    <path d="M24 10v27" stroke="#5c6164" strokeWidth="2" />
                    <rect x="6" y="32" width="9" height="8" rx="2" fill="#f4f4f4" stroke="#444" />
                    <path d="M8 36h5M10.500 33.500v5" stroke="#222" />
                </svg>
            </button>
            <button aria-label="Preferences" className="ml-auto"><Cog /></button>
        </footer>
    );
}

export default function App() {
    return (
        <div className="flex min-h-screen flex-col overflow-hidden bg-white font-['Noto_Sans',sans-serif]">
            <Gradients />
            <MenuBar />
            <div className="relative flex h-[22px] items-center justify-center border-b border-[#b5b5b5] bg-linear-to-b from-[#e6e6e6] to-[#d4d4d4] font-[Inter,sans-serif] text-[13px] text-[#3a3a3a]">
                <div className="absolute left-2 flex gap-2">
                    <span className="size-3 rounded-full border border-[#bdbdbd] bg-[#d0d0d0]" />
                    <span className="size-3 rounded-full border border-[#bdbdbd] bg-[#d0d0d0]" />
                    <span className="size-3 rounded-full border border-[#bdbdbd] bg-[#d0d0d0]" />
                </div>
                Autodesk Fusion 360 (Startup License)
            </div>
            <TabBar />
            <main className="relative flex flex-1 flex-col pt-1">
                <div className="absolute top-[113px] left-[390px]"><Gear /></div>
                <div className="relative flex flex-1 flex-col gap-1">
                    <Toolbar />
                    <Browser />
                    <div className="mt-auto mb-1 ml-1"><Panel title="COMMENTS" plus /></div>
                </div>
                <ViewCube />
                <MoveDialog />
                <div role="tooltip" className="absolute top-[391px] left-[760px] flex h-5 items-center border border-[#c4c4c4] bg-[#f2f2f2] px-[3px] font-[Inter,sans-serif] text-[13px] whitespace-nowrap text-black shadow-md">
                    Pick a Rotate Axis
                </div>
                <NavBar />
                <p className="absolute right-[38px] bottom-2 text-[11px] leading-4 text-black">2 selections</p>
            </main>
            <div className="bg-[#8b8d8c]">
                <Timeline />
                <div className="flex h-[11px] items-center overflow-hidden font-['DejaVu_Sans_Mono',monospace] text-[12px] leading-3 text-[#4c4f50]">
                    <span className="h-full w-[38px] bg-linear-to-r from-[#a8765c] to-[#595a52]" />
                    <span className="h-full w-52 bg-[#25292c]" />
                    <span className="ml-5">229</span>
                    <span className="ml-7">System image:</span>
                    <span className="ml-auto h-full w-[30px] bg-[#45484f]" />
                    <span className="h-full w-[111px] bg-black" />
                </div>
            </div>
        </div>
    );
}
